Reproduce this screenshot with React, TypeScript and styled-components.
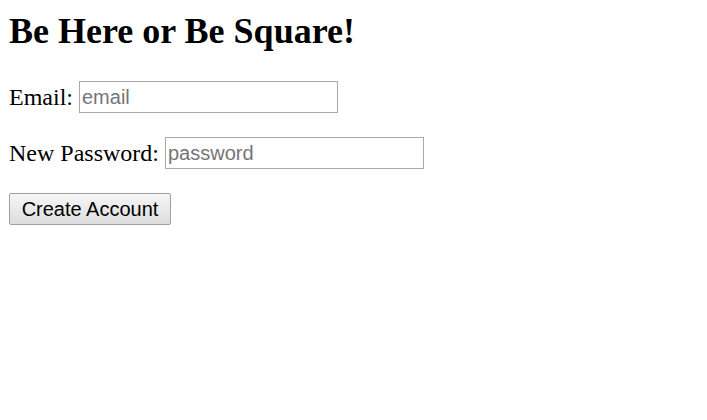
import React from "react";
import styled, { createGlobalStyle } from "styled-components";

const Global = createGlobalStyle`
  body {
    margin: 8px;
    font-family: "Liberation Serif", "Times New Roman", serif;
    font-size: 24px;
    color: #000;
    background: #fff;
  }
`;

const Title = styled.h1`
  font-size: 36px;
  font-weight: bold;
  margin: 2px 0 0 1px;
  line-height: 42px;
`;

const Form = styled.form`
  display: flex;
  flex-direction: column;
  gap: 24px;
  margin-top: 29px;
  align-items: flex-start;
`;

const Row = styled.div`
  display: flex;
  align-items: center;
  gap: 6px;
  margin-left: 1px;
`;

const Label = styled.label`
  font-size: 24px;
`;

const Input = styled.input`
  box-sizing: border-box;
  width: 259px;
  height: 32px;
  border: 1px solid #a9a9a9;
  padding: 0 2px;
  font-family: "Liberation Sans", Arial, sans-serif;
  font-size: 20px;
  &::placeholder {
    color: #757575;
  }
`;

const Button = styled.button`
  box-sizing: border-box;
  width: 162px;
  height: 32px;
  margin-left: 1px;
  font-family: "Liberation Sans", Arial, sans-serif;
  font-size: 20px;
  color: #000;
  border: 1px solid #a0a0a0;
  border-radius: 2px;
  background: linear-gradient(#f6f6f6, #dddddd);
  padding: 0 6px;
`;

export default function App() {
  return (
    <>
      <Global />
      <Title>Be Here or Be Square!</Title>
      <Form onSubmit={(e) => e.preventDefault()}>
        <Row>
          <Label>Email:</Label>
          <Input type="email" placeholder="email" />
        </Row>
        <Row>
          <Label>New Password:</Label>
          <Input type="password" placeholder="password" />
        </Row>
        <Button type="submit">Create Account</Button>
      </Form>
    </>
  );
}
